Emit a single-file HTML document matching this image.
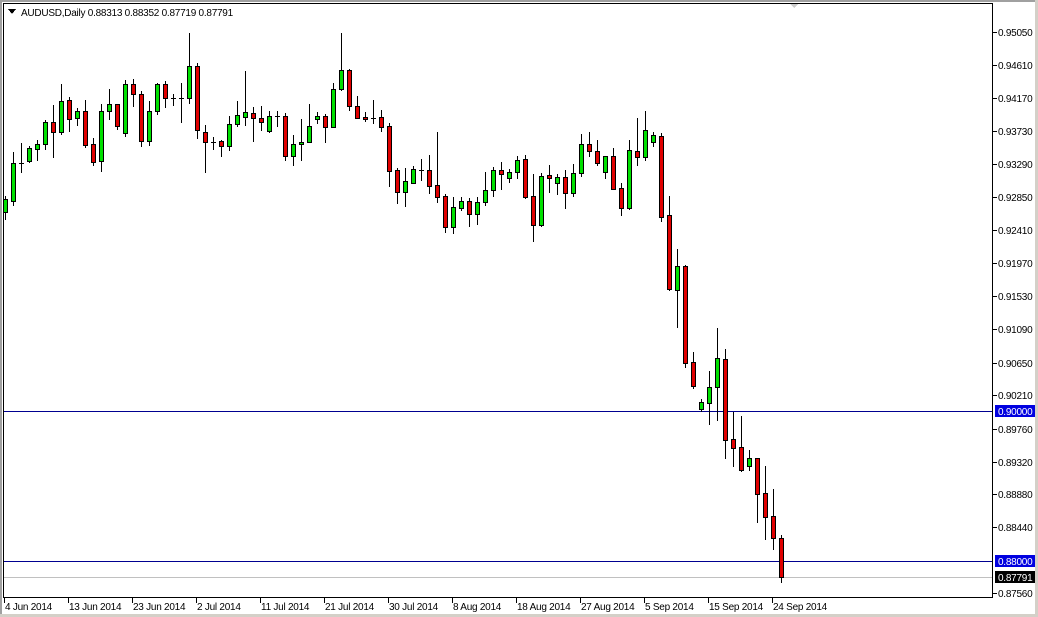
<!DOCTYPE html>
<html><head><meta charset="utf-8"><style>
html,body{margin:0;padding:0;background:#fff;width:1038px;height:617px;overflow:hidden}
svg{display:block}
text{font-family:"Liberation Sans",sans-serif;font-size:10px;fill:#000;letter-spacing:-0.25px}
</style></head><body>
<svg width="1038" height="617" viewBox="0 0 1038 617" xmlns="http://www.w3.org/2000/svg" shape-rendering="crispEdges">
<rect x="0" y="0" width="1038" height="617" fill="#fff"/>
<rect x="0" y="0" width="1038" height="2" fill="#a0a0a0"/>
<rect x="0" y="0" width="2" height="617" fill="#a0a0a0"/>
<rect x="1035" y="0" width="3" height="617" fill="#d4d0c8"/>
<rect x="0" y="614" width="1038" height="3" fill="#d4d0c8"/>
<rect x="3.5" y="3.5" width="989" height="594" fill="#fff" stroke="#000" stroke-width="1"/>
<path d="M790 4 l4 4 l4 -4z" fill="#ccc"/>
<g stroke="#000" stroke-width="1">
<line x1="993" y1="32.5" x2="997" y2="32.5"/><line x1="993" y1="65.5" x2="997" y2="65.5"/><line x1="993" y1="98.5" x2="997" y2="98.5"/><line x1="993" y1="131.5" x2="997" y2="131.5"/><line x1="993" y1="164.5" x2="997" y2="164.5"/><line x1="993" y1="197.5" x2="997" y2="197.5"/><line x1="993" y1="230.5" x2="997" y2="230.5"/><line x1="993" y1="263.5" x2="997" y2="263.5"/><line x1="993" y1="296.5" x2="997" y2="296.5"/><line x1="993" y1="329.5" x2="997" y2="329.5"/><line x1="993" y1="363.5" x2="997" y2="363.5"/><line x1="993" y1="395.5" x2="997" y2="395.5"/><line x1="993" y1="429.5" x2="997" y2="429.5"/><line x1="993" y1="462.5" x2="997" y2="462.5"/><line x1="993" y1="494.5" x2="997" y2="494.5"/><line x1="993" y1="527.5" x2="997" y2="527.5"/><line x1="993" y1="593.5" x2="997" y2="593.5"/>
<line x1="4.5" y1="598" x2="4.5" y2="603"/><line x1="68.5" y1="598" x2="68.5" y2="603"/><line x1="132.5" y1="598" x2="132.5" y2="603"/><line x1="196.5" y1="598" x2="196.5" y2="603"/><line x1="260.5" y1="598" x2="260.5" y2="603"/><line x1="324.5" y1="598" x2="324.5" y2="603"/><line x1="388.5" y1="598" x2="388.5" y2="603"/><line x1="452.5" y1="598" x2="452.5" y2="603"/><line x1="516.5" y1="598" x2="516.5" y2="603"/><line x1="580.5" y1="598" x2="580.5" y2="603"/><line x1="644.5" y1="598" x2="644.5" y2="603"/><line x1="708.5" y1="598" x2="708.5" y2="603"/><line x1="772.5" y1="598" x2="772.5" y2="603"/>
</g>
<line x1="4" y1="411.5" x2="992" y2="411.5" stroke="#000090"/>
<line x1="4" y1="561.5" x2="992" y2="561.5" stroke="#000090"/>
<line x1="4" y1="577.5" x2="992" y2="577.5" stroke="#c0c0c0"/>
<g id="c"></g>
<path d="M8 9 h8 l-4 5z" fill="#000"/>
<text x="21" y="16">AUDUSD,Daily  0.88313 0.88352 0.87719 0.87791</text>
<g>
<text x="998" y="36">0.95050</text><text x="998" y="69">0.94610</text><text x="998" y="102">0.94170</text><text x="998" y="135">0.93730</text><text x="998" y="168">0.93290</text><text x="998" y="201">0.92850</text><text x="998" y="234">0.92410</text><text x="998" y="267">0.91970</text><text x="998" y="300">0.91530</text><text x="998" y="333">0.91090</text><text x="998" y="367">0.90650</text><text x="998" y="399">0.90210</text><text x="998" y="433">0.89760</text><text x="998" y="466">0.89320</text><text x="998" y="498">0.88880</text><text x="998" y="531">0.88440</text><text x="998" y="597">0.87560</text>
</g>
<rect x="995" y="405" width="40" height="12" fill="#0000e0"/><text x="998" y="415" style="fill:#fff">0.90000</text>
<rect x="995" y="555" width="40" height="12" fill="#0000e0"/><text x="998" y="565" style="fill:#fff">0.88000</text>
<rect x="995" y="571" width="40" height="12" fill="#000"/><text x="998" y="581" style="fill:#fff">0.87791</text>
<g>
<text x="5" y="610">4 Jun 2014</text><text x="69" y="610">13 Jun 2014</text><text x="133" y="610">23 Jun 2014</text><text x="197" y="610">2 Jul 2014</text><text x="261" y="610">11 Jul 2014</text><text x="325" y="610">21 Jul 2014</text><text x="389" y="610">30 Jul 2014</text><text x="453" y="610">8 Aug 2014</text><text x="517" y="610">18 Aug 2014</text><text x="581" y="610">27 Aug 2014</text><text x="645" y="610">5 Sep 2014</text><text x="709" y="610">15 Sep 2014</text><text x="773" y="610">24 Sep 2014</text>
</g>
</svg>
<script>
var D=[
["g",196,220,199,212],["g",152,206,163,201],["d",143,173,163,163],["g",146,163,148,161],["g",140,161,144,149],["g",120,150,122,144],["r",105,158,122,132],["g",84,135,101,132],["r",97,132,100,119],["g",108,126,111,118],
["r",100,148,111,145],["r",138,166,144,162],["g",104,172,111,161],["g",89,120,104,111],["r",104,130,104,126],["g",80,137,84,133],["r",79,107,84,94],["r",91,147,94,141],["g",101,146,111,141],["g",83,115,84,111],
["r",81,108,84,98],["d",94,106,98,98],["d",83,123,98,98],["g",33,104,66,98],["r",63,139,66,130],["r",125,173,132,142],["d",137,150,142,142],["r",140,157,141,146],["g",116,151,124,146],["g",101,127,115,124],
["g",71,126,112,117],["r",107,142,113,118],["r",106,131,118,122],["g",111,133,116,131],["d",111,127,116,116],["r",113,161,116,156],["g",135,166,144,156],["g",119,161,142,144],["g",104,143,126,142],["g",112,124,116,119],
["r",114,143,116,127],["g",83,127,89,127],["g",33,91,70,89],["r",69,111,70,106],["r",96,118,106,118],["r",112,122,117,119],["d",100,124,118,118],["r",110,132,117,127],["r",123,187,126,171],["r",168,204,170,192],
["g",168,207,181,192],["g",166,184,169,183],["d",159,181,170,170],["r",155,194,170,186],["r",132,203,185,197],["r",194,233,196,227],["g",197,234,207,227],["g",197,211,201,208],["r",198,227,201,214],["g",197,225,202,214],
["g",172,206,190,202],["g",167,197,170,190],["r",162,190,170,174],["g",169,183,172,178],["g",156,179,160,172],["r",155,199,159,197],["r",174,242,196,225],["g",173,227,176,225],["r",165,193,175,178],["g",174,195,177,183],
["r",170,209,177,193],["g",164,197,173,193],["g",134,177,144,173],["r",132,157,144,151],["r",140,166,151,163],["g",156,179,156,172],["r",148,190,156,189],["r",183,216,188,208],["g",140,210,150,208],["r",118,166,151,157],
["g",111,161,130,157],["g",132,147,135,142],["r",133,222,136,217],["r",196,291,215,289],["g",249,328,266,290],["r",265,368,266,363],["r",352,389,362,386],["g",399,412,402,409],["g",371,425,387,403],["g",328,421,358,387],
["r",349,459,359,440],["r",412,467,439,448],["r",416,472,447,470],["g",450,471,458,466],["r",458,523,458,494],["r",466,540,493,517],["r",489,550,516,538],["r",535,583,538,577]
];
var s="";
for(var i=0;i<D.length;i++){var d=D[i],c=5+8*i;
s+='<line x1="'+(c+0.5)+'" y1="'+d[1]+'" x2="'+(c+0.5)+'" y2="'+d[2]+'" stroke="#000"/>';
if(d[0]=="d"){s+='<line x1="'+(c-2)+'" y1="'+(d[3]+0.5)+'" x2="'+(c+3)+'" y2="'+(d[3]+0.5)+'" stroke="#000"/>';}
else{var h=Math.max(1,d[4]-d[3]);s+='<rect x="'+(c-1.5)+'" y="'+(d[3]+0.5)+'" width="4" height="'+h+'" fill="'+(d[0]=="g"?"#00e000":"#e00000")+'" stroke="#000"/>';}
}
document.getElementById("c").innerHTML=s;
</script>
</body></html>
